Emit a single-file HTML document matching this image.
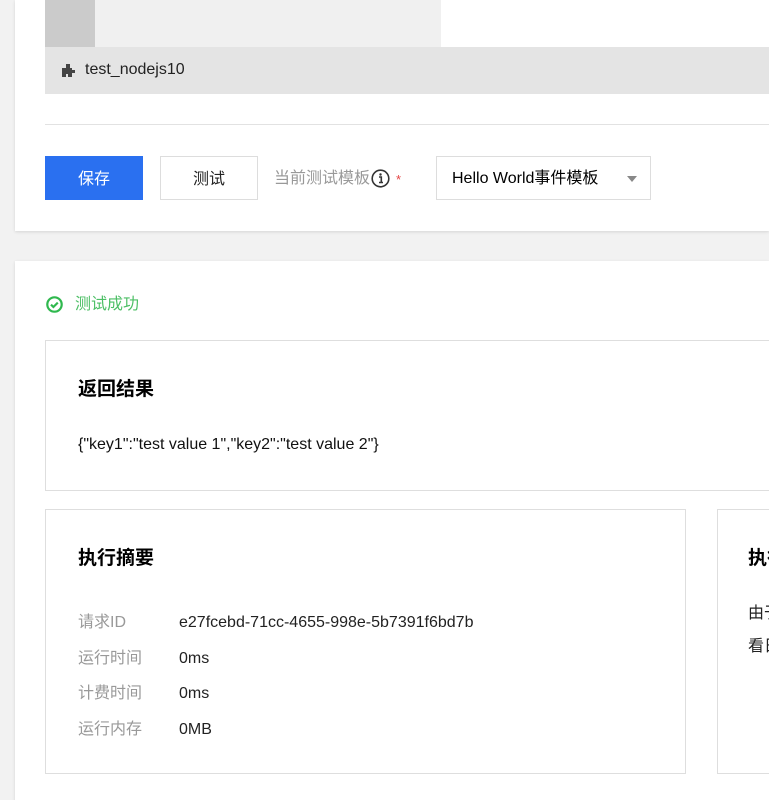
<!DOCTYPE html>
<html><head><meta charset="utf-8"><style>
*{box-sizing:border-box;margin:0;padding:0}
html,body{width:769px;height:800px;overflow:hidden}
body{background:#f2f2f2;font-family:"Liberation Sans","Noto Sans CJK SC",sans-serif;color:#000;position:relative;font-size:16px}
.abs{position:absolute}
.card{position:absolute;background:#fff;left:15px;right:0;box-shadow:0 1px 3px rgba(0,0,0,.12);overflow:hidden}
.box{position:absolute;border:1px solid #dedede;background:#fff;overflow:hidden}
.t{position:absolute;white-space:nowrap;line-height:20px;height:20px}
</style></head><body>
<div class="card" style="top:0;height:231px">
  <div class="abs" style="left:30px;top:0;width:50px;height:47px;background:#cbcbcb"></div>
  <div class="abs" style="left:80px;top:0;width:346px;height:47px;background:#f0f0f0"></div>
  <div class="abs" style="left:30px;right:0;top:47px;height:47px;background:#e4e4e4"></div>
  <svg class="abs" style="left:46px;top:62px" width="16" height="16" viewBox="0 0 16 16"><path d="M1 6h4V2h4v4h2v2h3v3h-3v4H7v-3H5v3H1z" fill="#444"/></svg>
  <div class="t" style="left:70px;top:60px;font-size:16px;color:#222">test_nodejs10</div>
  <div class="abs" style="left:30px;right:0;top:124px;height:1px;background:#e2e2e2"></div>
  <div class="abs" style="left:30px;top:156px;width:98px;height:44px;background:#2a70f0;color:#fff;text-align:center;line-height:48px;font-size:16px">保存</div>
  <div class="abs" style="left:145px;top:156px;width:98px;height:44px;border:1px solid #ddd;color:#222;text-align:center;line-height:46px;font-size:16px">测试</div>
  <div class="t" style="left:259px;top:169px;font-size:16px;color:#999">当前测试模板</div>
  <svg class="abs" style="left:356px;top:169px" width="19" height="19" viewBox="0 0 19 19"><circle cx="9.5" cy="9.5" r="8.3" fill="none" stroke="#333" stroke-width="1.6"/><circle cx="9.5" cy="5.5" r="1.2" fill="#333"/><path d="M8 8h2.3v5.5M8 13.5h4" stroke="#333" stroke-width="1.6" fill="none"/></svg>
  <div class="t" style="left:381px;top:170px;font-size:13px;color:#e54545">*</div>
  <div class="abs" style="left:421px;top:156px;width:215px;height:44px;border:1px solid #ddd"></div>
  <div class="t" style="left:437px;top:169px;font-size:16px;color:#000">Hello World事件模板</div>
  <div class="abs" style="left:612px;top:176px;border-left:5px solid transparent;border-right:5px solid transparent;border-top:6px solid #888"></div>
</div>
<div class="card" style="top:261px;height:560px">
  <svg class="abs" style="left:31px;top:35px" width="17" height="17" viewBox="0 0 17 17"><circle cx="8.5" cy="8.5" r="7.2" fill="none" stroke="#2fb84e" stroke-width="2.2"/><path d="M5 8.6l2.4 2.4 4.4-4.4" stroke="#2fb84e" stroke-width="2.2" fill="none"/></svg>
  <div class="t" style="left:60px;top:34px;font-size:16px;color:#4cbf65">测试成功</div>
  <div class="box" style="left:30px;top:79px;right:0;border-right:none;height:151px">
    <div class="t" style="left:32px;top:39px;font-size:19px;font-weight:bold">返回结果</div>
    <div class="t" style="left:32px;top:94px;font-size:16px;color:#111">{"key1":"test value 1","key2":"test value 2"}</div>
  </div>
  <div class="box" style="left:30px;top:248px;width:641px;height:265px">
    <div class="t" style="left:32px;top:39px;font-size:19px;font-weight:bold">执行摘要</div>
    <div class="t" style="left:32px;top:103px;color:#999">请求ID</div><div class="t" style="left:133px;top:103px;color:#222">e27fcebd-71cc-4655-998e-5b7391f6bd7b</div>
    <div class="t" style="left:32px;top:139px;color:#999">运行时间</div><div class="t" style="left:133px;top:139px;color:#222">0ms</div>
    <div class="t" style="left:32px;top:174px;color:#999">计费时间</div><div class="t" style="left:133px;top:174px;color:#222">0ms</div>
    <div class="t" style="left:32px;top:210px;color:#999">运行内存</div><div class="t" style="left:133px;top:210px;color:#222">0MB</div>
  </div>
  <div class="box" style="left:702px;top:248px;right:0;border-right:none;height:265px">
    <div class="t" style="left:30px;top:39px;font-size:19px;font-weight:bold">执行日志</div>
    <div class="t" style="left:30px;top:94px;color:#222">由于日志</div>
    <div class="t" style="left:30px;top:127px;color:#222">看日志</div>
  </div>
</div>
</body></html>
